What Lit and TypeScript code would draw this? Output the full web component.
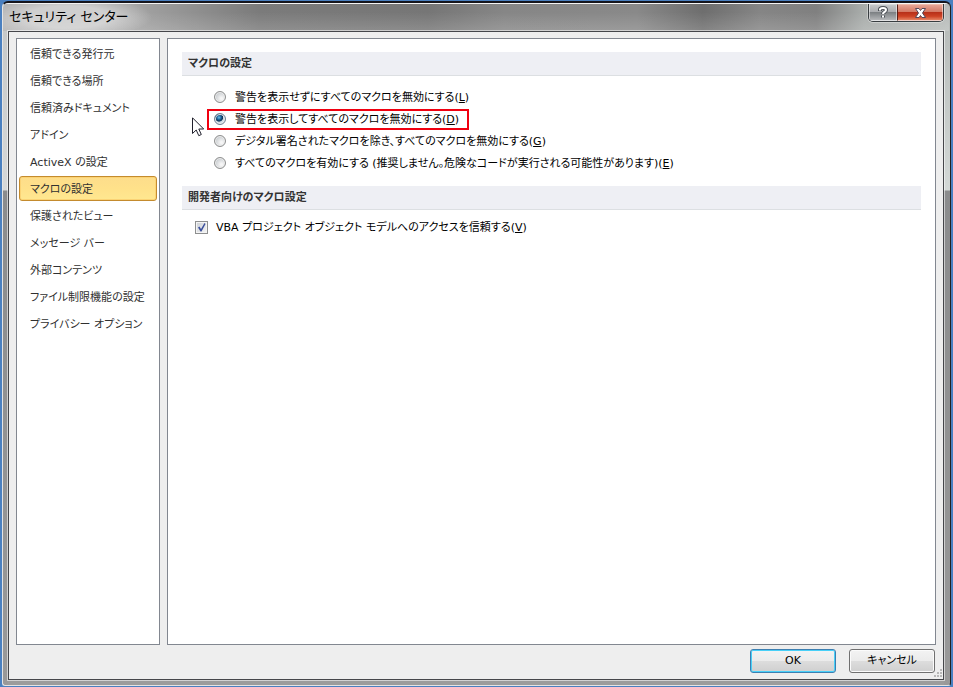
import { LitElement, html, css } from "lit";
import { customElement, state } from "lit/decorators.js";
import { classMap } from "lit/directives/class-map.js";

const PAGES = [
  "信頼できる発行元",
  "信頼できる場所",
  "信頼済みドキュメント",
  "アドイン",
  "ActiveX の設定",
  "マクロの設定",
  "保護されたビュー",
  "メッセージ バー",
  "外部コンテンツ",
  "ファイル制限機能の設定",
  "プライバシー オプション",
];

const MACRO_OPTIONS = [
  { text: "警告を表示せずにすべてのマクロを無効にする", key: "L" },
  { text: "警告を表示してすべてのマクロを無効にする", key: "D", marked: true },
  { text: "デジタル署名されたマクロを除き、すべてのマクロを無効にする", key: "G" },
  {
    text: "すべてのマクロを有効にする (推奨しません。危険なコードが実行される可能性があります)",
    key: "E",
  },
];

@customElement("app-root")
export class AppRoot extends LitElement {
  @state() private page = 5;
  @state() private option = "D";

  static styles = css`
    :host {
      display: block;
      height: 100vh;
      box-sizing: border-box;
      font-family: "DejaVu Sans", "Noto Sans CJK JP", sans-serif;
      font-size: 11px;
      line-height: 18px;
      font-feature-settings: "palt";
      color: #000;
      background: #4a80c0;
      padding: 1px 2px;
    }
    * {
      box-sizing: border-box;
    }
    button,
    input {
      font: inherit;
      font-feature-settings: inherit;
      color: inherit;
      margin: 0;
    }
    .window {
      display: flex;
      flex-direction: column;
      height: 100%;
      padding: 0 6px 5px 5px;
      border: 1px solid #e4e4e4;
      border-top: 2px solid #15151c;
      border-right-color: #222;
      border-radius: 6px 6px 3px 3px;
      background:
        linear-gradient(#f4f4f4, #f4f4f4) 0 0 / 100% 1px no-repeat,
        linear-gradient(#c4c6c6 0, #d6d8d8 187px, #8b8c8d 188px, #999) 0 0 / 5px 100% no-repeat,
        linear-gradient(#b4b8b6 0, #d3d8d6 187px, #8b8c8d 188px, #999) 100% 0 / 6px 100% no-repeat,
        #9c9c9c;
    }
    .titlebar {
      display: flex;
      justify-content: space-between;
      align-items: flex-start;
      flex: none;
      height: 27px;
      margin: 1px -5px 0 -5px;
      padding-left: 6px;
      border-radius: 5px 5px 0 0;
      background:
        linear-gradient(transparent 30%, rgba(255, 255, 255, 0.16)),
        radial-gradient(ellipse 85px 22px at 64px 13px, #cfcfcf 50%, rgba(200, 200, 200, 0) 100%),
        linear-gradient(
          90deg,
          #adadad 0,
          #a4a4a4 130px,
          #7b7b7b 27%,
          #767676 45%,
          #868686 53%,
          #898989 67%,
          #6e6e6e 74%,
          #858585 80%,
          #808080 86%,
          #a9adab 91%,
          #b9bdbb 100%
        );
    }
    .title {
      margin: 0;
      font-size: 13px;
      font-weight: 400;
      line-height: 26px;
    }
    .caption {
      display: flex;
      height: 18px;
      margin-right: 5px;
      border: 1px solid #383d40;
      border-top: 0;
      border-radius: 0 0 5px 5px;
      overflow: hidden;
      box-shadow: 0 0 0 1px rgba(255, 255, 255, 0.35);
    }
    .caption button {
      display: grid;
      place-items: center;
      width: 28px;
      padding: 0;
      border: 1px solid rgba(255, 255, 255, 0.5);
      background: linear-gradient(#c5c7c9, #a9abae 48%, #7d8184 50%, #b4b6b8);
    }
    .caption .close {
      width: 46px;
      border-left-color: #5a2018;
      background: linear-gradient(#e7a494, #d27762 48%, #b8311a 50%, #cc4224 75%, #e58362);
    }
    .client {
      display: flex;
      flex-direction: column;
      flex: 1;
      min-height: 0;
      padding: 6px 7px;
      border: 1px solid #45464a;
      outline: 1px solid rgba(255, 255, 255, 0.55);
      background: #eee;
      position: relative;
    }
    .panels {
      display: flex;
      gap: 7px;
      flex: 1;
      min-height: 0;
    }
    .pages {
      display: flex;
      flex-direction: column;
      gap: 2px;
      flex: none;
      width: 144px;
      padding: 2px;
      border: 1px solid #828790;
      background: #fff;
    }
    .page {
      height: 25px;
      padding: 2px 10px 0;
      border: 1px solid transparent;
      border-radius: 3px;
      background: none;
      color: #303030;
      text-align: left;
      white-space: nowrap;
    }
    .page.selected {
      border-color: #c48b2e;
      background: linear-gradient(#fddd8b, #ffe18a 50%, #ffe890);
      box-shadow: inset 0 0 0 1px #fbd375;
    }
    .content {
      flex: 1;
      min-width: 0;
      padding: 13px 14px;
      border: 1px solid #828790;
      background: #fff;
    }
    .heading {
      height: 24px;
      margin: 0;
      padding: 0 6px;
      border-bottom: 1px solid #dcdfe2;
      background: #eeeff4;
      color: #333;
      font-size: 11px;
      font-weight: 700;
      line-height: 24px;
    }
    .options {
      display: flex;
      flex-direction: column;
      align-items: flex-start;
      gap: 1px;
      margin: 0 0 12px;
      padding: 11px 0 0 25px;
      border: 0;
    }
    .option {
      display: flex;
      align-items: center;
      gap: 9px;
      height: 21px;
      padding: 0 8px 1px 5px;
      border: 2px solid transparent;
      white-space: nowrap;
    }
    .label {
      padding-top: 2px;
    }
    .option.marked {
      border-color: #f00010;
    }
    .radio {
      appearance: none;
      flex: none;
      width: 12px;
      height: 12px;
      border: 1px solid #8e8f8f;
      border-radius: 50%;
      background: radial-gradient(circle at 65% 65%, #f6f6f6 10%, #c5c9cd 75%);
      box-shadow: inset 0 0 0 1px #eee;
    }
    .radio:checked {
      border-color: #6d7f91;
      background: radial-gradient(circle at 40% 35%, #6cc4ee 0, #1c5f94 25%, #0c2f52 42%, #c9d9e4 50%, #e4ecf1 100%);
    }
    .trust {
      display: flex;
      align-items: center;
      gap: 8px;
      height: 22px;
      margin-top: 6px;
      padding-left: 13px;
    }
    .tick {
      display: grid;
      flex: none;
      width: 13px;
      height: 13px;
    }
    .tick > * {
      grid-area: 1 / 1;
    }
    .check {
      appearance: none;
      width: 13px;
      height: 13px;
      border: 1px solid #8e8f8f;
      background: linear-gradient(135deg, #cbcfd5, #f6f6f6);
      box-shadow: inset 0 0 0 1px #f4f4f4;
    }
    .mark {
      visibility: hidden;
      pointer-events: none;
    }
    .check:checked + .mark {
      visibility: visible;
    }
    u {
      text-underline-offset: 1px;
    }
    .footer {
      display: flex;
      justify-content: flex-end;
      gap: 13px;
      flex: none;
      padding: 4px 1px 0 0;
    }
    .push {
      width: 86px;
      height: 24px;
      padding: 0;
      border: 1px solid #707070;
      border-radius: 3px;
      background: linear-gradient(#f3f3f3, #ebebeb 49%, #dddddd 50%, #cfcfcf);
      box-shadow: inset 0 0 0 1px #fbfbfb;
    }
    .push.default {
      border-color: #3c7fb1;
      box-shadow: inset 0 0 0 1px #48d0f8;
    }
    .grip {
      position: absolute;
      right: 1px;
      bottom: 1px;
    }
    .pointer {
      position: absolute;
      left: 183px;
      top: 85px;
      pointer-events: none;
    }
  `;

  render() {
    return html`
      <div class="window">
        <header class="titlebar">
          <h1 class="title">セキュリティ センター</h1>
          <div class="caption">
            <button aria-label="ヘルプ">
              <svg width="12" height="13" viewBox="0 0 12 13" fill="none">
                <path d="M3 5V3.500Q3 2 6 2T9 4Q9 5.200 7.500 6T6 8M6 9.500V11.500" stroke="#4b5056" stroke-width="4" />
                <path d="M3 4.500V3.500Q3 2 6 2T9 4Q9 5.200 7.500 6T6 8M6 9.500V11.500" stroke="#fff" stroke-width="2" />
              </svg>
            </button>
            <button class="close" aria-label="閉じる">
              <svg width="13" height="12" viewBox="0 0 13 12">
                <path
                  d="M1.500 1.500H5L6.500 3.500L8 1.500H11.500L8.500 6L11.500 10.500H8L6.500 8.500L5 10.500H1.500L4.500 6Z"
                  fill="#fff"
                  stroke="#55495a"
                />
              </svg>
            </button>
          </div>
        </header>

        <div class="client">
          <div class="panels">
            <nav class="pages">
              ${PAGES.map(
                (name, i) => html`<button
                  class=${classMap({ page: true, selected: i === this.page })}
                  @click=${() => (this.page = i)}
                >${name}</button>`
              )}
            </nav>
            <main class="content">
              <h2 class="heading">マクロの設定</h2>
              <fieldset class="options" aria-label="マクロの設定">
                ${MACRO_OPTIONS.map(
                  (o) => html`<label class=${classMap({ option: true, marked: !!o.marked })}>
                    <input
                      class="radio"
                      type="radio"
                      name="macro"
                      .checked=${this.option === o.key}
                      @change=${() => (this.option = o.key)}
                    />
                    <span class="label">${o.text}(<u>${o.key}</u>)</span>
                  </label>`
                )}
              </fieldset>
              <h2 class="heading">開発者向けのマクロ設定</h2>
              <label class="trust">
                <span class="tick">
                  <input class="check" type="checkbox" checked />
                  <svg class="mark" width="13" height="13" viewBox="0 0 13 13">
                    <path d="M3 6.500L4.500 5.500L6 8L9.500 2L10.500 3L6.500 10.500H5.500Z" fill="#3b4f9c" />
                  </svg>
                </span>
                <span class="label">VBA プロジェクト オブジェクト モデルへのアクセスを信頼する(<u>V</u>)</span>
              </label>
            </main>
          </div>
          <footer class="footer">
            <button class="push default">OK</button>
            <button class="push">キャンセル</button>
          </footer>
          <svg class="grip" width="9" height="9" viewBox="0 0 9 9" fill="#b8b8b8">
            <path d="M7 0h2v2H7zM7 3h2v2H7zM4 3h2v2H4zM7 6h2v2H7zM4 6h2v2H4zM1 6h2v2H1z" />
          </svg>
          <svg class="pointer" width="13" height="20" viewBox="0 0 13 20">
            <path
              d="M.5 .8V16.500L4.200 13L6.800 18.700L9.300 17.500L6.800 12H11.700Z"
              fill="#fff"
              stroke="#20202c"
            />
          </svg>
        </div>
      </div>
    `;
  }
}
